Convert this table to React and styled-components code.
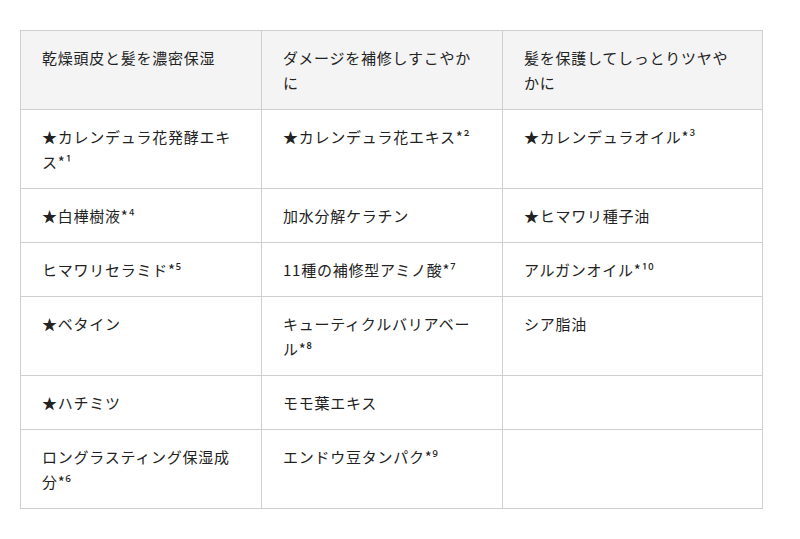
import React from 'react';
import styled, { createGlobalStyle } from 'styled-components';

const GlobalStyle = createGlobalStyle`
    body {
        margin: 0;
        background: #fff;
        font-family: 'Noto Sans CJK JP', 'Noto Sans', sans-serif;
        color: #222;
    }
`;

const Wrapper = styled.div`
    padding: 30px 0 0 20px;
`;

const Table = styled.table`
    border-collapse: collapse;
    table-layout: fixed;
    width: 742px;

    th,
    td {
        border: 1px solid #cfcfcf;
        padding: 14px 21px;
        font-size: 15px;
        line-height: 25px;
        letter-spacing: 0.05em;
        text-align: left;
        vertical-align: top;
        font-weight: normal;
    }

    th {
        background: #f4f4f4;
    }
`;

const Col = styled.col`
    width: ${(props) => props.$w}px;
`;

const headers = ['乾燥頭皮と髪を濃密保湿', 'ダメージを補修しすこやかに', '髪を保護してしっとりツヤやかに'];

const rows = [
    ['★カレンデュラ花発酵エキス*¹', '★カレンデュラ花エキス*²', '★カレンデュラオイル*³'],
    ['★白樺樹液*⁴', '加水分解ケラチン', '★ヒマワリ種子油'],
    ['ヒマワリセラミド*⁵', '11種の補修型アミノ酸*⁷', 'アルガンオイル*¹⁰'],
    ['★ベタイン', 'キューティクルバリアベール*⁸', 'シア脂油'],
    ['★ハチミツ', 'モモ葉エキス', ''],
    ['ロングラスティング保湿成分*⁶', 'エンドウ豆タンパク*⁹', ''],
];

const App = () => (
    <Wrapper>
        <GlobalStyle />
        <Table>
            <colgroup>
                <Col $w={241} />
                <Col $w={241} />
                <Col $w={260} />
            </colgroup>
            <thead>
                <tr>
                    {headers.map((h) => (
                        <th key={h}>{h}</th>
                    ))}
                </tr>
            </thead>
            <tbody>
                {rows.map((row, i) => (
                    <tr key={i}>
                        {row.map((text, j) => (
                            <td key={j}>{text}</td>
                        ))}
                    </tr>
                ))}
            </tbody>
        </Table>
    </Wrapper>
);

export default App;
